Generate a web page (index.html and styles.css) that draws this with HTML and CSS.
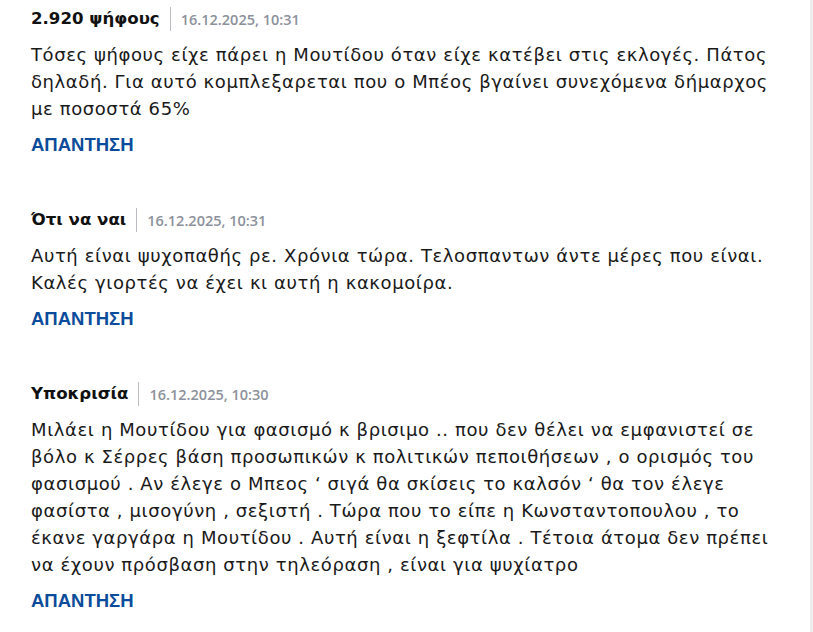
FILE: index.html
```html
<!DOCTYPE html>
<html lang="el">
<head>
<meta charset="utf-8">
<link rel="stylesheet" href="styles.css">
</head>
<body>
<div class="page">
  <div class="comments">
    <article class="comment">
      <header class="meta">
        <span class="author">2.920 ψήφους</span>
        <span class="date">16.12.2025, 10:31</span>
      </header>
      <p class="text">Τόσες ψήφους είχε πάρει η Μουτίδου όταν είχε κατέβει στις εκλογές. Πάτος δηλαδή. Για αυτό κομπλεξαρεται που ο Μπέος βγαίνει συνεχόμενα δήμαρχος με ποσοστά 65%</p>
      <a class="reply" href="#">ΑΠΑΝΤΗΣΗ</a>
    </article>
    <article class="comment">
      <header class="meta">
        <span class="author">Ότι να ναι</span>
        <span class="date">16.12.2025, 10:31</span>
      </header>
      <p class="text">Αυτή είναι ψυχοπαθής ρε. Χρόνια τώρα. Τελοσπαντων άντε μέρες που είναι. Καλές γιορτές να έχει κι αυτή η κακομοίρα.</p>
      <a class="reply" href="#">ΑΠΑΝΤΗΣΗ</a>
    </article>
    <article class="comment">
      <header class="meta">
        <span class="author">Υποκρισία</span>
        <span class="date">16.12.2025, 10:30</span>
      </header>
      <p class="text">Μιλάει η Μουτίδου για φασισμό κ βρισιμο .. που δεν θέλει να εμφανιστεί σε βόλο κ Σέρρες βάση προσωπικών κ πολιτικών πεποιθήσεων , ο ορισμός του φασισμού . Αν έλεγε ο Μπεος ‘ σιγά θα σκίσεις το καλσόν ‘ θα τον έλεγε φασίστα , μισογύνη , σεξιστή . Τώρα που το είπε η Κωνσταντοπουλου , το έκανε γαργάρα η Μουτίδου . Αυτή είναι η ξεφτίλα . Τέτοια άτομα δεν πρέπει να έχουν πρόσβαση στην τηλεόραση , είναι για ψυχίατρο</p>
      <a class="reply" href="#">ΑΠΑΝΤΗΣΗ</a>
    </article>
  </div>
</div>
</body>
</html>
```
FILE: styles.css
```css
html, body {
  margin: 0;
  padding: 0;
  background: #ffffff;
}
.page {
  width: 810px;
  height: 632px;
  border-right: 3px solid #ededed;
  overflow: hidden;
}
.comments {
  padding: 7px 0 0 31px;
  width: 752px;
  display: flex;
  flex-direction: column;
  gap: 53px;
}
.comment {
  display: flex;
  flex-direction: column;
}
.meta {
  display: flex;
  align-items: center;
  height: 24px;
}
.author {
  font-family: "DejaVu Sans", sans-serif;
  font-weight: 700;
  font-size: 16.6px;
  color: #111111;
  padding-right: 10px;
  border-right: 1px solid #b9bcc2;
  line-height: 24px;
}
.date {
  font-family: "Open Sans", sans-serif;
  font-weight: 600;
  font-size: 14.5px;
  color: #8c919b;
  padding-left: 10px;
}
.text {
  margin: 10px 0 0;
  font-family: "DejaVu Sans", sans-serif;
  font-size: 18px;
  letter-spacing: 0.6px;
  line-height: 27px;
  color: #1a1a1a;
}
.reply {
  margin-top: 13px;
  align-self: flex-start;
  font-family: "Liberation Sans Narrow", "Liberation Sans", sans-serif;
  font-weight: 700;
  font-size: 18.5px;
  line-height: 20px;
  color: #0b4c9b;
  text-decoration: none;
}
```
